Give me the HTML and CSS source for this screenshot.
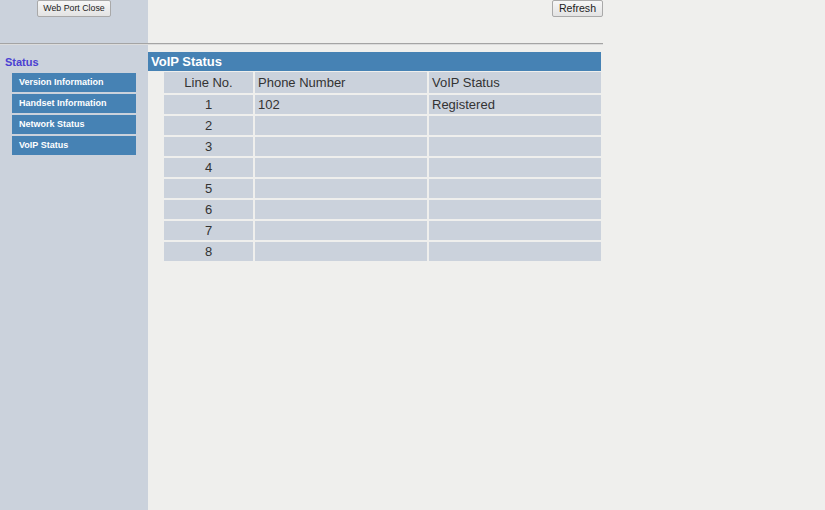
FILE: index.html
```html
<!DOCTYPE html>
<html>
<head>
<meta charset="utf-8">
<title>VoIP Status</title>
<link rel="stylesheet" href="styles.css">
</head>
<body>
<div class="page">
  <div class="side">
    <div class="side-top">
      <button class="btn btn-small">Web Port Close</button>
    </div>
    <div class="side-title">Status</div>
    <ul class="menu">
      <li>Version Information</li>
      <li>Handset Information</li>
      <li>Network Status</li>
      <li>VoIP Status</li>
    </ul>
  </div>
  <div class="main">
    <div class="main-top">
      <button class="btn btn-refresh">Refresh</button>
    </div>
    <div class="section-title">VoIP Status</div>
    <table class="status-table">
      <colgroup>
        <col class="c1"><col class="c2"><col class="c3">
      </colgroup>
      <tr class="head"><td class="num">Line No.</td><td>Phone Number</td><td>VoIP Status</td></tr>
      <tr><td class="num">1</td><td>102</td><td>Registered</td></tr>
      <tr><td class="num">2</td><td></td><td></td></tr>
      <tr><td class="num">3</td><td></td><td></td></tr>
      <tr><td class="num">4</td><td></td><td></td></tr>
      <tr><td class="num">5</td><td></td><td></td></tr>
      <tr><td class="num">6</td><td></td><td></td></tr>
      <tr><td class="num">7</td><td></td><td></td></tr>
      <tr><td class="num">8</td><td></td><td></td></tr>
    </table>
  </div>
</div>
</body>
</html>
```

FILE: styles.css
```css
html, body {
  margin: 0;
  padding: 0;
}
body {
  font-family: "Liberation Sans", Arial, sans-serif;
  background: #efefed;
  color: #333333;
}
.page {
  display: flex;
  height: 510px;
  overflow: hidden;
}
.side {
  width: 148px;
  flex: 0 0 148px;
  background: #cbd2dc;
}
.side-top {
  height: 43px;
  border-bottom: 1px solid #a4a4a4;
  box-shadow: 0 1px 0 #dcdcdc;
  display: flex;
  justify-content: center;
  align-items: flex-start;
}
.main {
  flex: 1;
}
.main-top {
  width: 455px;
  height: 43px;
  border-bottom: 1px solid #a4a4a4;
  box-shadow: 0 1px 0 #dcdcdc;
  display: flex;
  justify-content: flex-end;
  align-items: flex-start;
}
.btn {
  margin: 0;
  height: 17px;
  padding: 0;
  border: 1px solid #a9a9a9;
  border-radius: 2px;
  background: linear-gradient(#f7f7f7, #e3e3e3);
  color: #222;
  font-family: "Liberation Sans", Arial, sans-serif;
  line-height: 15px;
}
.btn-small {
  width: 74px;
  font-size: 8.8px;
}
.btn-refresh {
  width: 51px;
  font-size: 10.6px;
}
.side-title {
  padding: 12px 0 0 5px;
  font-size: 11px;
  line-height: 13px;
  font-weight: bold;
  color: #4a40d2;
}
.menu {
  list-style: none;
  margin: 4px 0 0 12px;
  padding: 0;
  width: 124px;
  display: flex;
  flex-direction: column;
  gap: 2px;
}
.menu li {
  height: 19px;
  line-height: 19px;
  padding-left: 7px;
  background: #4682b4;
  color: #ffffff;
  font-size: 9px;
  font-weight: bold;
}
.section-title {
  margin-top: 8px;
  width: 450px;
  height: 19px;
  line-height: 19px;
  padding-left: 3px;
  background: #4682b4;
  color: #ffffff;
  font-size: 13px;
  font-weight: bold;
}
.status-table {
  margin: -1px 0 0 14px;
  border-collapse: separate;
  border-spacing: 2px;
  table-layout: fixed;
  width: 441px;
  font-size: 13px;
}
.status-table .c1 { width: 89px; }
.status-table .c2 { width: 172px; }
.status-table .c3 { width: 172px; }
.status-table td {
  height: 19px;
  padding: 0 3px;
  background: #cbd2dc;
  color: #333333;
  line-height: 19px;
  white-space: nowrap;
}
.status-table tr.head td {
  height: 21px;
  line-height: 21px;
}
.status-table td.num {
  text-align: center;
}
```
